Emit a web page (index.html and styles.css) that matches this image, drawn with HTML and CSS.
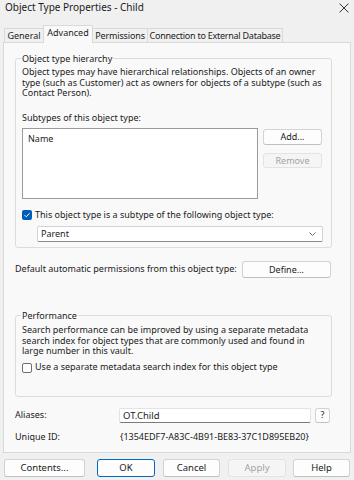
FILE: index.html
```html
<!DOCTYPE html>
<html lang="en">
<head>
  <meta charset="UTF-8">
  <meta name="viewport" content="width=device-width, initial-scale=1.0">
  <title>Object Type Properties - Child</title>
  <link rel="stylesheet" href="styles.css">
</head>
<body>
  <div class="titlebar">
    <span class="title">Object Type Properties - Child</span>
    <svg class="close" width="10" height="10" viewBox="0 0 10 10">
      <path d="M0.5 0.5 L9.5 9.5 M9.5 0.5 L0.5 9.5" stroke="#1b1b1b" stroke-width="0.9" fill="none"/>
    </svg>
  </div>

  <div class="tabs">
    <div class="tab tab-general">General</div>
    <div class="tab tab-advanced selected">Advanced</div>
    <div class="tab tab-permissions">Permissions</div>
    <div class="tab tab-connection">Connection to External Database</div>
  </div>

  <div class="panel">
    <fieldset class="group group-hierarchy">
      <legend>Object type hierarchy</legend>
      <p class="desc">Object types may have hierarchical relationships. Objects of an owner type (such as Customer) act as owners for objects of a subtype (such as Contact Person).</p>
      <div class="label-subtypes">Subtypes of this object type:</div>
      <div class="list-row">
        <div class="listbox">Name</div>
        <div class="list-buttons">
          <button class="btn btn-add">Add...</button>
          <button class="btn btn-remove" disabled>Remove</button>
        </div>
      </div>
      <div class="check-row check-subtype">
        <span class="checkbox checked">
          <svg width="10" height="10" viewBox="0 0 10 10">
            <path d="M2.6 5.1 L4.3 6.8 L7.5 3.4" stroke="#fff" stroke-width="1" fill="none"/>
          </svg>
        </span>
        <span>This object type is a subtype of the following object type:</span>
      </div>
      <div class="select">
        <span>Parent</span>
        <svg width="7" height="4" viewBox="0 0 7 4">
          <path d="M0.5 0.5 L3.5 3.5 L6.5 0.5" stroke="#5f5f5f" stroke-width="0.9" fill="none"/>
        </svg>
      </div>
    </fieldset>

    <div class="define-row">
      <span>Default automatic permissions from this object type:</span>
      <button class="btn btn-define">Define...</button>
    </div>

    <fieldset class="group group-performance">
      <legend>Performance</legend>
      <p class="desc">Search performance can be improved by using a separate metadata search index for object types that are commonly used and found in large number in this vault.</p>
      <div class="check-row check-index">
        <span class="checkbox"></span>
        <span>Use a separate metadata search index for this object type</span>
      </div>
    </fieldset>

    <div class="field-row aliases-row">
      <span class="field-label">Aliases:</span>
      <div class="textbox">OT.Child</div>
      <button class="btn btn-help">?</button>
    </div>
    <div class="field-row id-row">
      <span class="field-label">Unique ID:</span>
      <span class="field-value">{1354EDF7-A83C-4B91-BE83-37C1D895EB20}</span>
    </div>
  </div>

  <div class="footer">
    <button class="btn btn-contents">Contents...</button>
    <button class="btn btn-ok">OK</button>
    <button class="btn btn-cancel">Cancel</button>
    <button class="btn btn-apply" disabled>Apply</button>
    <button class="btn btn-helpbtn">Help</button>
  </div>
</body>
</html>
```

FILE: styles.css
```css
* {
  box-sizing: border-box;
}

body {
  margin: 0;
  width: 354px;
  height: 480px;
  overflow: hidden;
  background-color: #f0f0f0;
  color: #1b1b1b;
  font-family: "Noto Sans", sans-serif;
  font-size: 9px;
  line-height: 10.5px;
}

/* Barra de titulo */
.titlebar {
  height: 25px;
  display: flex;
  justify-content: space-between;
  padding: 1px 5px 0 5px;
}
.title {
  font-size: 10px;
  line-height: 12px;
}
.close {
  margin-top: 2px;
}

/* Abas */
.tabs {
  display: flex;
  align-items: flex-end;
  height: 17px;
  padding-left: 4px;
}
.tab {
  height: 14px;
  border: 1px solid #d9d9d9;
  border-bottom: none;
  border-right: none;
  text-align: center;
  line-height: 13px;
  white-space: nowrap;
}
.tab-general { width: 39px; }
.tab-advanced { width: 50px; }
.tab-permissions {
  width: 54px;
  letter-spacing: -0.15px;
}
.tab-connection {
  width: 136px;
  border-right: 1px solid #d9d9d9;
  letter-spacing: -0.25px;
}
.tab.selected {
  position: relative;
  z-index: 1;
  height: 18px;
  margin-bottom: -1px;
  background-color: #f9f9f9;
  border-right: 1px solid #d9d9d9;
  line-height: 14px;
}
.tab.selected + .tab {
  border-left: none;
}

/* Painel */
.panel {
  margin: 0 3px;
  height: 411px;
  border: 1px solid #d9d9d9;
  background-color: #f9f9f9;
  padding: 0 0 0 11px;
}

.group {
  width: 317px;
  margin: 0;
  padding: 0 6px 5px 6px;
  border: 1px solid #dcdcdc;
  border-radius: 3px;
  min-width: 0;
}
.group legend {
  padding: 0 1px;
  margin-left: -1px;
  line-height: 11px;
}
.group-hierarchy {
  margin-top: 10px;
}
.desc {
  margin: 3px 0 0 0;
  width: 304px;
}

.label-subtypes {
  margin-top: 14px;
}

.list-row {
  display: flex;
  margin-top: 5px;
}
.listbox {
  width: 236px;
  height: 71px;
  background-color: #fff;
  border: 1px solid #9a9a9a;
  padding: 5px 5px;
}
.list-buttons {
  display: flex;
  flex-direction: column;
  margin-left: 5px;
}

.btn {
  font-family: "Noto Sans", sans-serif;
  font-size: 9px;
  color: #1b1b1b;
  background-color: #fdfdfd;
  border: 1px solid #d3d3d3;
  border-bottom-color: #c0c0c0;
  border-radius: 3px;
  padding: 0;
  line-height: 10px;
}
.btn:disabled {
  color: #a3a3a3;
  background-color: #f5f5f5;
  border-color: #e3e3e3;
}
.btn-add {
  width: 59px;
  height: 16px;
  margin-top: 1px;
}
.btn-remove {
  width: 59px;
  height: 15px;
  margin-top: 8px;
}

.check-row {
  display: flex;
  align-items: center;
  height: 12px;
  white-space: nowrap;
}
.check-subtype {
  margin-top: 10px;
}
.checkbox {
  width: 10px;
  height: 10px;
  margin-right: 3px;
  border: 1px solid #6e6e6e;
  border-radius: 2px;
  background-color: #fff;
  flex-shrink: 0;
}
.checkbox.checked {
  border: none;
  background-color: #005fb8;
}
.checkbox svg {
  display: block;
}

.select {
  display: flex;
  justify-content: space-between;
  align-items: center;
  width: 286px;
  height: 16px;
  margin: 5px 0 0 15px;
  padding: 0 6px 0 3px;
  background-color: #fff;
  border: 1px solid #d3d3d3;
  border-bottom-color: #8a8a8a;
  border-radius: 2px;
}

.define-row {
  display: flex;
  align-items: center;
  width: 317px;
  height: 17px;
  margin-top: 13px;
  white-space: nowrap;
}
.btn-define {
  width: 89px;
  height: 17px;
  margin-left: auto;
  margin-right: 1px;
}

.group-performance {
  margin-top: 32px;
  padding-bottom: 22px;
}
.group-performance .desc {
  margin-top: 4px;
}
.check-index {
  margin-top: 5px;
}

.field-row {
  display: flex;
  align-items: center;
  white-space: nowrap;
}
.aliases-row {
  margin-top: 11px;
  height: 15px;
}
.field-label {
  width: 104px;
}
.textbox {
  width: 192px;
  height: 15px;
  background-color: #fff;
  border: 1px solid #e3e3e3;
  border-bottom-color: #7a7a7a;
  border-radius: 2px;
  padding: 1px 3px 0 3px;
  line-height: 12px;
  font-size: 9.5px;
}
.btn-help {
  width: 15px;
  height: 15px;
  margin-left: 4px;
}
.id-row {
  margin-top: 9px;
  height: 12px;
}
.field-value {
  margin-left: 1px;
}

/* Botoes de baixo */
.footer {
  display: flex;
  margin-top: 6px;
  padding-left: 4px;
}
.footer .btn {
  height: 18px;
  font-size: 9.5px;
}
.btn-contents { width: 81px; }
.btn-ok {
  width: 58px;
  margin-left: 12px;
  border-color: #0067c0;
}
.btn-cancel {
  width: 57px;
  margin-left: 8px;
}
.btn-apply {
  width: 58px;
  margin-left: 8px;
}
.btn-helpbtn {
  width: 57px;
  margin-left: 7px;
}
```
